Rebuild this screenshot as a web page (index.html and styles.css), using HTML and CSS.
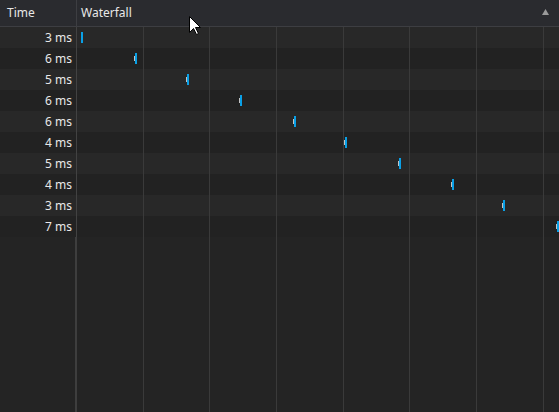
FILE: index.html
```html
<!DOCTYPE html>
<html>
<head>
<meta charset="utf-8">
<link rel="stylesheet" href="styles.css">
</head>
<body>
<div class="grid">
  <div class="header">
    <div class="hcell time-col">Time</div>
    <div class="hcell wf-col">
      <span>Waterfall</span>
      <svg class="sort" width="7" height="6" viewBox="0 0 7 6"><path d="M3.5 0 L7 6 L0 6 Z" fill="#9a9a9a"/></svg>
    </div>
  </div>
  <div class="body">
    <div class="row"><div class="time">3 ms</div><div class="wf"><div class="bar first" style="margin-left:4px"></div></div></div>
    <div class="row"><div class="time">6 ms</div><div class="wf"><div class="bar" style="margin-left:57px"></div></div></div>
    <div class="row"><div class="time">5 ms</div><div class="wf"><div class="bar" style="margin-left:109px"></div></div></div>
    <div class="row"><div class="time">6 ms</div><div class="wf"><div class="bar" style="margin-left:162px"></div></div></div>
    <div class="row"><div class="time">6 ms</div><div class="wf"><div class="bar" style="margin-left:216px"></div></div></div>
    <div class="row"><div class="time">4 ms</div><div class="wf"><div class="bar" style="margin-left:267px"></div></div></div>
    <div class="row"><div class="time">5 ms</div><div class="wf"><div class="bar" style="margin-left:321px"></div></div></div>
    <div class="row"><div class="time">4 ms</div><div class="wf"><div class="bar" style="margin-left:374px"></div></div></div>
    <div class="row"><div class="time">3 ms</div><div class="wf"><div class="bar" style="margin-left:425px"></div></div></div>
    <div class="row"><div class="time">7 ms</div><div class="wf"><div class="bar" style="margin-left:479px"></div></div></div>
    <div class="row filler"><div class="time"></div><div class="wf"></div></div>
    <div class="gridlines">
      <div class="gcol"></div><div class="gcol"></div><div class="gcol"></div><div class="gcol"></div>
      <div class="gcol"></div><div class="gcol"></div><div class="gcol"></div><div class="gcol"></div>
    </div>
  </div>
</div>
<svg class="cursor" width="13" height="20" viewBox="0 0 13 20"><path d="M0.5 0.5 L0.5 16.5 L4.5 12.5 L7.5 18.5 L9.5 17.5 L6.5 11.5 L11.5 11.5 Z" fill="#fff" stroke="#000" stroke-width="1"/></svg>
</body>
</html>
```
FILE: styles.css
```css
html, body {
  margin: 0;
  padding: 0;
  height: 100%;
  background: #242424;
  overflow: hidden;
}
body {
  font-family: "Noto Sans", "Open Sans", sans-serif;
  font-size: 12px;
  color: #e8e8e8;
  position: relative;
}
.grid {
  display: flex;
  flex-direction: column;
  height: 412px;
}
.header {
  display: flex;
  height: 26px;
  background: #2a2b2f;
  border-bottom: 1px solid #3d3e42;
  flex: none;
}
.hcell {
  display: flex;
  align-items: center;
  line-height: 26px;
}
.time-col {
  width: 69px;
  padding-left: 7px;
  border-right: 1px solid #3d3e42;
}
.wf-col {
  flex: 1;
  padding-left: 4px;
  padding-right: 10px;
  justify-content: space-between;
}
.sort {
  display: block;
  margin-top: -2px;
}
.body {
  flex: 1;
  display: flex;
  flex-direction: column;
  position: relative;
}
.row {
  display: flex;
  height: 21px;
  flex: none;
  background-color: #282828;
}
.row:nth-child(even) {
  background-color: #222222;
}
.row.filler {
  flex: 1;
  background-color: #242424;
}
.time {
  width: 72px;
  padding-right: 4px;
  text-align: right;
  line-height: 21px;
  border-right: 1px solid #424242;
  flex: none;
}
.filler .time {
  border-right: 2px solid #3e3e3e;
  width: 71px;
}
.wf {
  flex: 1;
  display: flex;
  align-items: center;
  overflow: hidden;
  position: relative;
  z-index: 1;
}
.gridlines {
  position: absolute;
  left: 77px;
  top: 0;
  bottom: 0;
  right: 0;
  display: flex;
  overflow: hidden;
  pointer-events: none;
}
.gcol {
  flex: none;
  width: 65.67px;
  border-right: 1px solid #3a3a3a;
}
.bar {
  width: 2px;
  height: 11px;
  background: #0aa0e6;
  position: relative;
  flex: none;
  border-left: 1px solid transparent;
  background-clip: content-box;
  box-sizing: content-box;
}
.bar::before {
  content: "";
  position: absolute;
  left: -1px;
  top: 3px;
  width: 1px;
  height: 5px;
  background: #c4c4c4;
}
.bar.first {
  border-left: 0;
}
.bar.first::before {
  display: none;
}
.cursor {
  position: absolute;
  left: 189px;
  top: 16px;
}
```
